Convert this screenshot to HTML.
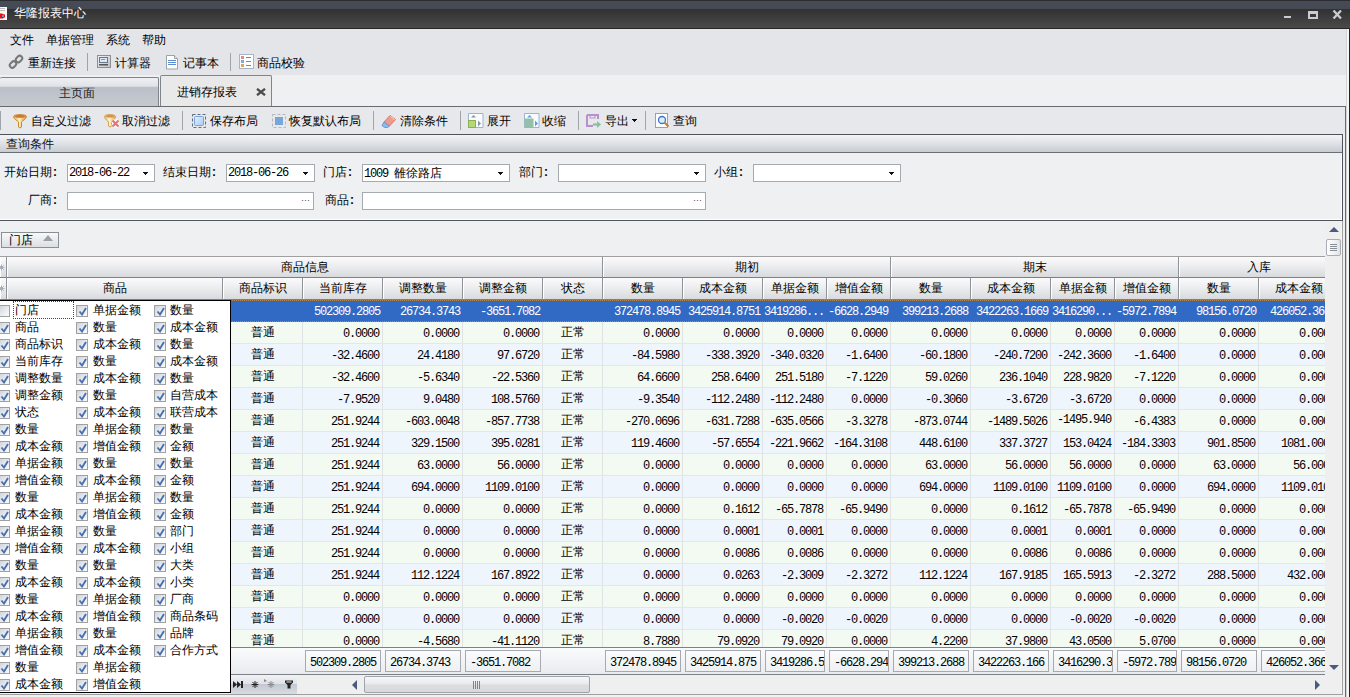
<!DOCTYPE html><html><head><meta charset="utf-8"><style>
*{margin:0;padding:0;box-sizing:border-box}
html,body{width:1350px;height:697px;overflow:hidden;background:#f0f0f0;font-family:"Liberation Sans",sans-serif;font-size:12px;color:#000}
.abs{position:absolute}
.t{position:absolute;white-space:nowrap;line-height:14px}
.num{font-family:"Liberation Mono",monospace;font-size:12px;letter-spacing:-1.2px}
#title{left:0;top:0;width:1350px;height:29px;background:linear-gradient(#2a2c30 0,#2a2c30 1px,#464b56 1px,#444954 9px,#313131 9px,#4a4a4a 28px,#262626 28px)}
#menu{left:0;top:29px;width:1350px;height:46px;background:#e4e5e9}
#tabs{left:0;top:75px;width:1350px;height:32px;background:#eff0f2}
.tab1{left:0;top:77px;width:159px;height:30px;border:1px solid #80858c;border-left:none;border-bottom:none;border-radius:2px 2px 0 0;background:linear-gradient(#eef0f3,#e0e3e7 28%,#bbc0c8 33%,#c6cad0)}
.tab2{left:160px;top:75px;width:112px;height:32px;border:1px solid #80858c;border-bottom:none;border-radius:2px 2px 0 0;background:#e9e9ea}
#win{left:0;top:106px;width:1346px;height:600px;border:1px solid #6a6a6a;border-left:none;border-bottom:none;background:#eef0f2}
#frame{left:1346px;top:29px;width:4px;height:668px;background:linear-gradient(90deg,#d2d4d6 0,#d2d4d6 1px,#f4f6f8 1px,#f4f6f8 3px,#222428 3px)}
#tb2{left:0;top:107px;width:1345px;height:27px;background:#e7e8ec}
.sep{position:absolute;width:1px;background:#9fa3aa}
#grp{left:0;top:134px;width:1343px;height:87px;border:1px solid #4e525b;border-left:none;background:#eef0f2;box-shadow:inset -1px -1px 0 #fff}
#grph{left:0;top:0;width:1342px;height:18px;background:linear-gradient(#f3f4f6,#dadde2 60%,#c8cbd1);border-bottom:1px solid #6b6f76}
.inp{position:absolute;height:18px;background:#fff;border:1px solid #a5a9b0}
.dd{position:absolute;width:0;height:0;border-left:3px solid transparent;border-right:3px solid transparent;border-top:3px solid #000}
#grid{left:0;top:221px;width:1343px;height:474px;border:1px solid #a0a0a0;border-left:none;border-top:none;background:#eef0f2}
.hc{position:absolute;background:linear-gradient(#fbfbfc,#ebecee 50%,#d9dadd);border-right:1px solid #8f9399;border-bottom:1px solid #7c8087;text-align:center;line-height:21px;box-shadow:inset 1px 0 0 #fff}
.dc{position:absolute;height:22px;border-right:1px solid #dfe3e6;border-bottom:1px solid #e3e6ea;line-height:21px;text-align:right;padding-right:3px;overflow:hidden;white-space:nowrap}
.dc.num{line-height:25px}
.fc{position:absolute;height:22px;top:650px;background:linear-gradient(#fbfbfc,#eef0f2);border:1px solid #a6aab0;line-height:24px;padding-left:4px;overflow:hidden;white-space:nowrap}
#popup{left:0;top:300px;width:231px;height:393px;background:#fff;border:1px solid #000;border-left:none;overflow:hidden}
.cb{position:absolute;width:12px;height:12px;border:1px solid #a0a0a0;background:linear-gradient(135deg,#cdd3dc,#e9ecf0 55%,#f9f9fa)}
.ck{position:absolute;left:1px;top:1px;width:9px;height:9px}
</style></head><body>
<div id="title" class="abs"></div>
<svg class="abs" style="left:0;top:7px" width="8" height="14"><rect x="0" y="0" width="7" height="13" fill="#fafafa"/><path d="M0 1.5h5M0 3.5h5" stroke="#b8b8b8"/><path d="M0 6.5h2l2 1h1v3h-1l-1 1h-3z" fill="#e01010"/><rect x="2" y="8" width="2" height="2" fill="#5a9ae0"/></svg>
<div class="t" style="left:14px;top:6px;color:#fff;font-size:12px">华隆报表中心</div>
<div class="abs" style="left:1284px;top:16px;width:7px;height:2px;background:#c8ccd4"></div>
<div class="abs" style="left:1308px;top:11px;width:10px;height:8px;border:2px solid #c8ccd4;border-top-width:3px"></div>
<svg class="abs" style="left:1332px;top:10px" width="11" height="9"><path d="M1.5 0.5l7.5 8M9 0.5l-7.5 8" stroke="#c8ccd4" stroke-width="2.3"/></svg>
<div id="menu" class="abs"></div>
<div class="t" style="left:10px;top:33px">文件</div>
<div class="t" style="left:46px;top:33px">单据管理</div>
<div class="t" style="left:106px;top:33px">系统</div>
<div class="t" style="left:142px;top:33px">帮助</div>
<div class="t" style="left:28px;top:56px">重新连接</div>
<div class="t" style="left:115px;top:56px">计算器</div>
<div class="t" style="left:183px;top:56px">记事本</div>
<div class="t" style="left:257px;top:56px">商品校验</div>
<div class="sep" style="left:87px;top:53px;height:18px"></div>
<div class="sep" style="left:230px;top:53px;height:18px"></div>
<svg class="abs" style="left:8px;top:54px" width="16" height="16"><g fill="none" stroke="#777" stroke-width="2"><rect x="1.5" y="8" width="7" height="5" rx="2.5" transform="rotate(-45 5 10.5)"/><rect x="7.5" y="2.5" width="7" height="5" rx="2.5" transform="rotate(-45 11 5)"/></g></svg>
<svg class="abs" style="left:97px;top:55px" width="14" height="14"><defs><linearGradient id="cg" x1="0" y1="0" x2="1" y2="1"><stop offset="0" stop-color="#f6f7f9"/><stop offset="1" stop-color="#b9bec6"/></linearGradient></defs><rect x="0.5" y="0.5" width="13" height="12" fill="url(#cg)" stroke="#8a9098"/><rect x="2.5" y="2.5" width="8" height="5" fill="#dbe7f5" stroke="#6a7888"/><rect x="4" y="4" width="4" height="1" fill="#7a9ac8"/><rect x="2" y="9" width="9" height="1.5" fill="#555"/></svg>
<svg class="abs" style="left:166px;top:55px" width="13" height="15"><path d="M0.5 0.5h8l3 3v10.5h-11z" fill="#fff" stroke="#9aa2ae"/><path d="M8.5 0.5v3h3" fill="#e8ecf0" stroke="#9aa2ae"/><path d="M2 5.5h8M2 7.5h8M2 9.5h8" stroke="#5a8ed0" stroke-width="1"/></svg>
<svg class="abs" style="left:239px;top:54px" width="15" height="15"><rect x="0.5" y="0.5" width="14" height="14" fill="#fff" stroke="#a8b4c8"/><rect x="2" y="2" width="3" height="3" fill="#e58a8a"/><rect x="2" y="6" width="3" height="3" fill="#7aa8e0"/><rect x="2" y="10" width="3" height="3" fill="#e8a050"/><path d="M7 3.5h5M7 7.5h5M7 11.5h5" stroke="#6a88b8"/></svg>
<div id="tabs" class="abs"></div>
<div class="abs tab1"></div>
<div class="t" style="left:59px;top:86px;color:#222">主页面</div>
<div class="abs tab2"></div>
<div class="t" style="left:177px;top:85px">进销存报表</div>
<svg class="abs" style="left:256px;top:88px" width="10" height="8"><path d="M1 0.8l8 6.4M9 0.8l-8 6.4" stroke="#4c4c4c" stroke-width="2.3"/></svg>
<div id="win" class="abs"></div><div id="frame" class="abs"></div>
<div id="tb2" class="abs"></div>
<div class="sep" style="left:0px;top:111px;height:19px"></div>
<div class="t" style="left:31px;top:114px">自定义过滤</div>
<div class="t" style="left:122px;top:114px">取消过滤</div>
<div class="t" style="left:210px;top:114px">保存布局</div>
<div class="t" style="left:289px;top:114px">恢复默认布局</div>
<div class="t" style="left:400px;top:114px">清除条件</div>
<div class="t" style="left:487px;top:114px">展开</div>
<div class="t" style="left:542px;top:114px">收缩</div>
<div class="t" style="left:605px;top:114px">导出</div>
<div class="t" style="left:673px;top:114px">查询</div>
<div class="sep" style="left:182px;top:111px;height:19px"></div>
<div class="sep" style="left:373px;top:111px;height:19px"></div>
<div class="sep" style="left:460px;top:111px;height:19px"></div>
<div class="sep" style="left:578px;top:111px;height:19px"></div>
<div class="sep" style="left:645px;top:111px;height:19px"></div>
<svg class="abs" style="left:632px;top:119px" width="5" height="3"><rect x="0" y="0" width="5" height="1" fill="#111"/><rect x="1" y="1" width="3" height="1" fill="#111"/><rect x="2" y="2" width="1" height="1" fill="#111"/></svg>
<svg class="abs" style="left:13px;top:113px" width="15" height="16"><defs><linearGradient id="fg" x1="0" y1="0" x2="1" y2="0"><stop offset="0" stop-color="#e8a848"/><stop offset="0.45" stop-color="#fff0c0"/><stop offset="1" stop-color="#d89030"/></linearGradient></defs><path d="M0.5 3.5C0.5 1 13.5 1 13.5 3.5C13.5 6 9 8 8.5 9V14C8.5 15 5.5 15 5.5 14V9C5 8 0.5 6 0.5 3.5z" fill="url(#fg)" stroke="#c88a30"/><ellipse cx="7" cy="3.2" rx="5" ry="1.5" fill="#c87838"/></svg>
<svg class="abs" style="left:104px;top:113px" width="18" height="16"><defs><linearGradient id="fg2" x1="0" y1="0" x2="1" y2="0"><stop offset="0" stop-color="#e8b860"/><stop offset="0.45" stop-color="#fff4d0"/><stop offset="1" stop-color="#dca040"/></linearGradient></defs><path d="M0.5 3.5C0.5 1 11.5 1 11.5 3.5C11.5 6 8 8 7.5 9V13C7.5 14 4.5 14 4.5 13V9C4 8 0.5 6 0.5 3.5z" fill="url(#fg2)" stroke="#d0a050"/><ellipse cx="6" cy="3.2" rx="4" ry="1.3" fill="#d09050"/><path d="M8.5 7.5l6 6M14.5 7.5l-6 6" stroke="#fff" stroke-width="4"/><path d="M8.5 7.5l6 6M14.5 7.5l-6 6" stroke="#e27474" stroke-width="2.2"/></svg>
<svg class="abs" style="left:192px;top:114px" width="15" height="14"><rect x="0.5" y="0.5" width="13" height="13" fill="none" stroke="#5f6e80" stroke-dasharray="3 2"/><defs><linearGradient id="sg" x1="0" y1="0" x2="1" y2="1"><stop offset="0" stop-color="#e4f0fd"/><stop offset="1" stop-color="#a9cbf2"/></linearGradient></defs><rect x="2.5" y="2.5" width="9" height="9" rx="1" fill="url(#sg)" stroke="#7aa4dc"/></svg>
<svg class="abs" style="left:272px;top:114px" width="15" height="14"><rect x="0.5" y="0.5" width="13" height="13" fill="none" stroke="#b4b8be" stroke-dasharray="3 2"/><rect x="3" y="3" width="8" height="8" fill="#79a5d8"/></svg>
<svg class="abs" style="left:381px;top:114px" width="16" height="14"><path d="M9 1.5L14.5 5.5L8.5 12L3 8z" fill="#f09a8a" stroke="#d87a6a"/><path d="M3 8L8.5 12L6.5 13.5H3.5L1 11.5z" fill="#8cb8ec" stroke="#6a98d8"/><path d="M9.5 2.5l4 3" stroke="#ffd8d0"/></svg>
<svg class="abs" style="left:468px;top:113px" width="16" height="15"><path d="M0.5 0.5h14.5v14h-14.5z" fill="#fafbfc" stroke="#9ab4d8"/><rect x="0.5" y="7.5" width="7" height="7" fill="#b4d878" stroke="#8ab050"/><path d="M3 4.5l2.5-2.5 2.5 2.5z" fill="#8a96a6"/><path d="M10 7.5l3 3-3 3z" fill="#8a96a6"/></svg>
<svg class="abs" style="left:524px;top:113px" width="16" height="15"><path d="M0.5 0.5h14.5v14h-14.5z" fill="#fafbfc" stroke="#9ab4d8"/><rect x="0.5" y="5.5" width="9" height="9" fill="#94c0aa"/><path d="M3 4.5l2.5-2.5 2.5 2.5z" fill="#6a9ad8"/><path d="M11 7.5l3 3-3 3z" fill="#6a9ad8"/></svg>
<svg class="abs" style="left:586px;top:114px" width="16" height="15"><path d="M1 1h11v4M1 1v11h6" fill="none" stroke="#b890d0" stroke-width="2"/><rect x="4" y="1" width="5" height="3" fill="none" stroke="#b890d0"/><path d="M7 10.5h5" stroke="#88c0a0" stroke-width="2.2"/><path d="M11 7l4 3.5-4 3.5z" fill="#88c0a0"/></svg>
<svg class="abs" style="left:655px;top:113px" width="16" height="16"><rect x="0.5" y="0.5" width="12" height="14" fill="#fff" stroke="#8ea2c0"/><circle cx="7" cy="7" r="3.5" fill="#dceafa" stroke="#3a78c8" stroke-width="1.3"/><path d="M9.5 9.5l4 4" stroke="#c87c2a" stroke-width="2"/></svg>
<div id="grp" class="abs"><div id="grph" class="abs"></div><div class="t" style="left:6px;top:2px;color:#111">查询条件</div></div>
<div class="t" style="left:4px;top:165px">开始日期<span style="display:inline-block;width:6px;text-align:center;font-weight:bold">:</span></div>
<div class="t" style="left:163px;top:165px">结束日期<span style="display:inline-block;width:6px;text-align:center;font-weight:bold">:</span></div>
<div class="t" style="left:323px;top:165px">门店<span style="display:inline-block;width:6px;text-align:center;font-weight:bold">:</span></div>
<div class="t" style="left:519px;top:165px">部门<span style="display:inline-block;width:6px;text-align:center;font-weight:bold">:</span></div>
<div class="t" style="left:714px;top:165px">小组<span style="display:inline-block;width:6px;text-align:center;font-weight:bold">:</span></div>
<div class="t" style="left:28px;top:193px">厂商<span style="display:inline-block;width:6px;text-align:center;font-weight:bold">:</span></div>
<div class="t" style="left:325px;top:193px">商品<span style="display:inline-block;width:6px;text-align:center;font-weight:bold">:</span></div>
<div class="inp" style="left:67px;top:164px;width:88px"></div>
<div class="t num" style="left:69px;top:166px">2018-06-22</div>
<svg class="abs" style="left:143px;top:172px" width="5" height="3"><rect x="0" y="0" width="5" height="1" fill="#111"/><rect x="1" y="1" width="3" height="1" fill="#111"/><rect x="2" y="2" width="1" height="1" fill="#111"/></svg>
<div class="inp" style="left:226px;top:164px;width:89px"></div>
<div class="t num" style="left:228px;top:166px">2018-06-26</div>
<svg class="abs" style="left:303px;top:172px" width="5" height="3"><rect x="0" y="0" width="5" height="1" fill="#111"/><rect x="1" y="1" width="3" height="1" fill="#111"/><rect x="2" y="2" width="1" height="1" fill="#111"/></svg>
<div class="inp" style="left:362px;top:164px;width:148px"></div>
<div class="t" style="left:364px;top:166px"><span class="num">1009&nbsp;</span>雒徐路店</div>
<svg class="abs" style="left:498px;top:172px" width="5" height="3"><rect x="0" y="0" width="5" height="1" fill="#111"/><rect x="1" y="1" width="3" height="1" fill="#111"/><rect x="2" y="2" width="1" height="1" fill="#111"/></svg>
<div class="inp" style="left:558px;top:164px;width:148px"></div>
<svg class="abs" style="left:694px;top:172px" width="5" height="3"><rect x="0" y="0" width="5" height="1" fill="#111"/><rect x="1" y="1" width="3" height="1" fill="#111"/><rect x="2" y="2" width="1" height="1" fill="#111"/></svg>
<div class="inp" style="left:753px;top:164px;width:148px"></div>
<svg class="abs" style="left:889px;top:172px" width="5" height="3"><rect x="0" y="0" width="5" height="1" fill="#111"/><rect x="1" y="1" width="3" height="1" fill="#111"/><rect x="2" y="2" width="1" height="1" fill="#111"/></svg>
<div class="inp" style="left:67px;top:192px;width:247px"></div>
<div class="t" style="left:301px;top:193px;font-size:9px;color:#444">···</div>
<div class="inp" style="left:362px;top:192px;width:344px"></div>
<div class="t" style="left:693px;top:193px;font-size:9px;color:#444">···</div>
<div id="grid" class="abs"></div>
<div class="abs" style="left:1px;top:232px;width:58px;height:16px;border:1px solid #8a8e95;background:linear-gradient(#f7f8f9,#dcdfe3)"></div>
<div class="t" style="left:9px;top:233px">门店</div>
<div class="abs" style="left:43px;top:235px;width:0;height:0;border-left:5.5px solid transparent;border-right:5.5px solid transparent;border-bottom:6px solid #9aa0a8"></div>
<div class="abs" style="left:0;top:256px;width:1325px;height:1px;background:#a0a0a0"></div>
<div class="abs" style="left:0;top:257px;width:1325px;height:390px;overflow:hidden">
<div class="hc" style="left:0;top:0;width:7px;height:21px"></div><div class="hc" style="left:0;top:21px;width:7px;height:22px"></div><svg class="abs" style="left:-2px;top:7px" width="7" height="7"><path d="M3.5 0.5v6M0.5 3.5h6M1.3 1.3l4.4 4.4M5.7 1.3l-4.4 4.4" stroke="#a0a8b4" stroke-width="0.9"/></svg><svg class="abs" style="left:-2px;top:28px" width="7" height="7"><path d="M3.5 0.5v6M0.5 3.5h6M1.3 1.3l4.4 4.4M5.7 1.3l-4.4 4.4" stroke="#a0a8b4" stroke-width="0.9"/></svg>
<div class="hc" style="left:7px;top:0;width:596px;height:21px">商品信息</div>
<div class="hc" style="left:603px;top:0;width:288px;height:21px">期初</div>
<div class="hc" style="left:891px;top:0;width:288px;height:21px">期末</div>
<div class="hc" style="left:1179px;top:0;width:160px;height:21px">入库</div>
<div class="hc" style="left:7px;top:21px;width:216px;height:22px">商品</div>
<div class="hc" style="left:223px;top:21px;width:80px;height:22px">商品标识</div>
<div class="hc" style="left:303px;top:21px;width:80px;height:22px">当前库存</div>
<div class="hc" style="left:383px;top:21px;width:80px;height:22px">调整数量</div>
<div class="hc" style="left:463px;top:21px;width:80px;height:22px">调整金额</div>
<div class="hc" style="left:543px;top:21px;width:60px;height:22px">状态</div>
<div class="hc" style="left:603px;top:21px;width:80px;height:22px">数量</div>
<div class="hc" style="left:683px;top:21px;width:80px;height:22px">成本金额</div>
<div class="hc" style="left:763px;top:21px;width:64px;height:22px">单据金额</div>
<div class="hc" style="left:827px;top:21px;width:64px;height:22px">增值金额</div>
<div class="hc" style="left:891px;top:21px;width:80px;height:22px">数量</div>
<div class="hc" style="left:971px;top:21px;width:80px;height:22px">成本金额</div>
<div class="hc" style="left:1051px;top:21px;width:64px;height:22px">单据金额</div>
<div class="hc" style="left:1115px;top:21px;width:64px;height:22px">增值金额</div>
<div class="hc" style="left:1179px;top:21px;width:80px;height:22px">数量</div>
<div class="hc" style="left:1259px;top:21px;width:80px;height:22px">成本金额</div>
<div class="abs" style="left:7px;top:43px;width:1320px;height:22px;background:#316ac5;border-top:1px dotted #b08a50;border-bottom:1px dotted #b08a50"></div>
<div class="dc num" style="left:303px;top:43px;width:80px;color:#fff;border:none">502309.2805</div>
<div class="dc num" style="left:383px;top:43px;width:80px;color:#fff;border:none">26734.3743</div>
<div class="dc num" style="left:463px;top:43px;width:80px;color:#fff;border:none">-3651.7082</div>
<div class="dc num" style="left:603px;top:43px;width:80px;color:#fff;border:none">372478.8945</div>
<div class="dc num" style="left:683px;top:43px;width:80px;color:#fff;border:none">3425914.8751</div>
<div class="dc num" style="left:763px;top:43px;width:64px;color:#fff;border:none">3419286...</div>
<div class="dc num" style="left:827px;top:43px;width:64px;color:#fff;border:none">-6628.2949</div>
<div class="dc num" style="left:891px;top:43px;width:80px;color:#fff;border:none">399213.2688</div>
<div class="dc num" style="left:971px;top:43px;width:80px;color:#fff;border:none">3422263.1669</div>
<div class="dc num" style="left:1051px;top:43px;width:64px;color:#fff;border:none">3416290...</div>
<div class="dc num" style="left:1115px;top:43px;width:64px;color:#fff;border:none">-5972.7894</div>
<div class="dc num" style="left:1179px;top:43px;width:80px;color:#fff;border:none">98156.0720</div>
<div class="dc num" style="left:1259px;top:43px;width:80px;color:#fff;border:none">426052.3660</div>
<div class="abs" style="left:7px;top:65px;width:1320px;height:22px;background:#f3faf1"></div>
<div class="dc" style="left:223px;top:65px;width:80px;text-align:center;padding:0">普通</div>
<div class="dc num" style="left:303px;top:65px;width:80px">0.0000</div>
<div class="dc num" style="left:383px;top:65px;width:80px">0.0000</div>
<div class="dc num" style="left:463px;top:65px;width:80px">0.0000</div>
<div class="dc" style="left:543px;top:65px;width:60px;text-align:center;padding:0">正常</div>
<div class="dc num" style="left:603px;top:65px;width:80px">0.0000</div>
<div class="dc num" style="left:683px;top:65px;width:80px">0.0000</div>
<div class="dc num" style="left:763px;top:65px;width:64px">0.0000</div>
<div class="dc num" style="left:827px;top:65px;width:64px">0.0000</div>
<div class="dc num" style="left:891px;top:65px;width:80px">0.0000</div>
<div class="dc num" style="left:971px;top:65px;width:80px">0.0000</div>
<div class="dc num" style="left:1051px;top:65px;width:64px">0.0000</div>
<div class="dc num" style="left:1115px;top:65px;width:64px">0.0000</div>
<div class="dc num" style="left:1179px;top:65px;width:80px">0.0000</div>
<div class="dc num" style="left:1259px;top:65px;width:80px">0.0000</div>
<div class="abs" style="left:7px;top:87px;width:1320px;height:22px;background:#eef5fd"></div>
<div class="dc" style="left:223px;top:87px;width:80px;text-align:center;padding:0">普通</div>
<div class="dc num" style="left:303px;top:87px;width:80px">-32.4600</div>
<div class="dc num" style="left:383px;top:87px;width:80px">24.4180</div>
<div class="dc num" style="left:463px;top:87px;width:80px">97.6720</div>
<div class="dc" style="left:543px;top:87px;width:60px;text-align:center;padding:0">正常</div>
<div class="dc num" style="left:603px;top:87px;width:80px">-84.5980</div>
<div class="dc num" style="left:683px;top:87px;width:80px">-338.3920</div>
<div class="dc num" style="left:763px;top:87px;width:64px">-340.0320</div>
<div class="dc num" style="left:827px;top:87px;width:64px">-1.6400</div>
<div class="dc num" style="left:891px;top:87px;width:80px">-60.1800</div>
<div class="dc num" style="left:971px;top:87px;width:80px">-240.7200</div>
<div class="dc num" style="left:1051px;top:87px;width:64px">-242.3600</div>
<div class="dc num" style="left:1115px;top:87px;width:64px">-1.6400</div>
<div class="dc num" style="left:1179px;top:87px;width:80px">0.0000</div>
<div class="dc num" style="left:1259px;top:87px;width:80px">0.0000</div>
<div class="abs" style="left:7px;top:109px;width:1320px;height:22px;background:#f3faf1"></div>
<div class="dc" style="left:223px;top:109px;width:80px;text-align:center;padding:0">普通</div>
<div class="dc num" style="left:303px;top:109px;width:80px">-32.4600</div>
<div class="dc num" style="left:383px;top:109px;width:80px">-5.6340</div>
<div class="dc num" style="left:463px;top:109px;width:80px">-22.5360</div>
<div class="dc" style="left:543px;top:109px;width:60px;text-align:center;padding:0">正常</div>
<div class="dc num" style="left:603px;top:109px;width:80px">64.6600</div>
<div class="dc num" style="left:683px;top:109px;width:80px">258.6400</div>
<div class="dc num" style="left:763px;top:109px;width:64px">251.5180</div>
<div class="dc num" style="left:827px;top:109px;width:64px">-7.1220</div>
<div class="dc num" style="left:891px;top:109px;width:80px">59.0260</div>
<div class="dc num" style="left:971px;top:109px;width:80px">236.1040</div>
<div class="dc num" style="left:1051px;top:109px;width:64px">228.9820</div>
<div class="dc num" style="left:1115px;top:109px;width:64px">-7.1220</div>
<div class="dc num" style="left:1179px;top:109px;width:80px">0.0000</div>
<div class="dc num" style="left:1259px;top:109px;width:80px">0.0000</div>
<div class="abs" style="left:7px;top:131px;width:1320px;height:22px;background:#eef5fd"></div>
<div class="dc" style="left:223px;top:131px;width:80px;text-align:center;padding:0">普通</div>
<div class="dc num" style="left:303px;top:131px;width:80px">-7.9520</div>
<div class="dc num" style="left:383px;top:131px;width:80px">9.0480</div>
<div class="dc num" style="left:463px;top:131px;width:80px">108.5760</div>
<div class="dc" style="left:543px;top:131px;width:60px;text-align:center;padding:0">正常</div>
<div class="dc num" style="left:603px;top:131px;width:80px">-9.3540</div>
<div class="dc num" style="left:683px;top:131px;width:80px">-112.2480</div>
<div class="dc num" style="left:763px;top:131px;width:64px">-112.2480</div>
<div class="dc num" style="left:827px;top:131px;width:64px">0.0000</div>
<div class="dc num" style="left:891px;top:131px;width:80px">-0.3060</div>
<div class="dc num" style="left:971px;top:131px;width:80px">-3.6720</div>
<div class="dc num" style="left:1051px;top:131px;width:64px">-3.6720</div>
<div class="dc num" style="left:1115px;top:131px;width:64px">0.0000</div>
<div class="dc num" style="left:1179px;top:131px;width:80px">0.0000</div>
<div class="dc num" style="left:1259px;top:131px;width:80px">0.0000</div>
<div class="abs" style="left:7px;top:153px;width:1320px;height:22px;background:#f3faf1"></div>
<div class="dc" style="left:223px;top:153px;width:80px;text-align:center;padding:0">普通</div>
<div class="dc num" style="left:303px;top:153px;width:80px">251.9244</div>
<div class="dc num" style="left:383px;top:153px;width:80px">-603.0048</div>
<div class="dc num" style="left:463px;top:153px;width:80px">-857.7738</div>
<div class="dc" style="left:543px;top:153px;width:60px;text-align:center;padding:0">正常</div>
<div class="dc num" style="left:603px;top:153px;width:80px">-270.0696</div>
<div class="dc num" style="left:683px;top:153px;width:80px">-631.7288</div>
<div class="dc num" style="left:763px;top:153px;width:64px">-635.0566</div>
<div class="dc num" style="left:827px;top:153px;width:64px">-3.3278</div>
<div class="dc num" style="left:891px;top:153px;width:80px">-873.0744</div>
<div class="dc num" style="left:971px;top:153px;width:80px">-1489.5026</div>
<div class="dc num" style="left:1051px;top:153px;width:64px;line-height:21px">-1495.940</div>
<div class="dc num" style="left:1115px;top:153px;width:64px">-6.4383</div>
<div class="dc num" style="left:1179px;top:153px;width:80px">0.0000</div>
<div class="dc num" style="left:1259px;top:153px;width:80px">0.0000</div>
<div class="abs" style="left:7px;top:175px;width:1320px;height:22px;background:#eef5fd"></div>
<div class="dc" style="left:223px;top:175px;width:80px;text-align:center;padding:0">普通</div>
<div class="dc num" style="left:303px;top:175px;width:80px">251.9244</div>
<div class="dc num" style="left:383px;top:175px;width:80px">329.1500</div>
<div class="dc num" style="left:463px;top:175px;width:80px">395.0281</div>
<div class="dc" style="left:543px;top:175px;width:60px;text-align:center;padding:0">正常</div>
<div class="dc num" style="left:603px;top:175px;width:80px">119.4600</div>
<div class="dc num" style="left:683px;top:175px;width:80px">-57.6554</div>
<div class="dc num" style="left:763px;top:175px;width:64px">-221.9662</div>
<div class="dc num" style="left:827px;top:175px;width:64px">-164.3108</div>
<div class="dc num" style="left:891px;top:175px;width:80px">448.6100</div>
<div class="dc num" style="left:971px;top:175px;width:80px">337.3727</div>
<div class="dc num" style="left:1051px;top:175px;width:64px">153.0424</div>
<div class="dc num" style="left:1115px;top:175px;width:64px">-184.3303</div>
<div class="dc num" style="left:1179px;top:175px;width:80px">901.8500</div>
<div class="dc num" style="left:1259px;top:175px;width:80px">1081.0000</div>
<div class="abs" style="left:7px;top:197px;width:1320px;height:22px;background:#f3faf1"></div>
<div class="dc" style="left:223px;top:197px;width:80px;text-align:center;padding:0">普通</div>
<div class="dc num" style="left:303px;top:197px;width:80px">251.9244</div>
<div class="dc num" style="left:383px;top:197px;width:80px">63.0000</div>
<div class="dc num" style="left:463px;top:197px;width:80px">56.0000</div>
<div class="dc" style="left:543px;top:197px;width:60px;text-align:center;padding:0">正常</div>
<div class="dc num" style="left:603px;top:197px;width:80px">0.0000</div>
<div class="dc num" style="left:683px;top:197px;width:80px">0.0000</div>
<div class="dc num" style="left:763px;top:197px;width:64px">0.0000</div>
<div class="dc num" style="left:827px;top:197px;width:64px">0.0000</div>
<div class="dc num" style="left:891px;top:197px;width:80px">63.0000</div>
<div class="dc num" style="left:971px;top:197px;width:80px">56.0000</div>
<div class="dc num" style="left:1051px;top:197px;width:64px">56.0000</div>
<div class="dc num" style="left:1115px;top:197px;width:64px">0.0000</div>
<div class="dc num" style="left:1179px;top:197px;width:80px">63.0000</div>
<div class="dc num" style="left:1259px;top:197px;width:80px">56.0000</div>
<div class="abs" style="left:7px;top:219px;width:1320px;height:22px;background:#eef5fd"></div>
<div class="dc" style="left:223px;top:219px;width:80px;text-align:center;padding:0">普通</div>
<div class="dc num" style="left:303px;top:219px;width:80px">251.9244</div>
<div class="dc num" style="left:383px;top:219px;width:80px">694.0000</div>
<div class="dc num" style="left:463px;top:219px;width:80px">1109.0100</div>
<div class="dc" style="left:543px;top:219px;width:60px;text-align:center;padding:0">正常</div>
<div class="dc num" style="left:603px;top:219px;width:80px">0.0000</div>
<div class="dc num" style="left:683px;top:219px;width:80px">0.0000</div>
<div class="dc num" style="left:763px;top:219px;width:64px">0.0000</div>
<div class="dc num" style="left:827px;top:219px;width:64px">0.0000</div>
<div class="dc num" style="left:891px;top:219px;width:80px">694.0000</div>
<div class="dc num" style="left:971px;top:219px;width:80px">1109.0100</div>
<div class="dc num" style="left:1051px;top:219px;width:64px">1109.0100</div>
<div class="dc num" style="left:1115px;top:219px;width:64px">0.0000</div>
<div class="dc num" style="left:1179px;top:219px;width:80px">694.0000</div>
<div class="dc num" style="left:1259px;top:219px;width:80px">1109.0100</div>
<div class="abs" style="left:7px;top:241px;width:1320px;height:22px;background:#f3faf1"></div>
<div class="dc" style="left:223px;top:241px;width:80px;text-align:center;padding:0">普通</div>
<div class="dc num" style="left:303px;top:241px;width:80px">251.9244</div>
<div class="dc num" style="left:383px;top:241px;width:80px">0.0000</div>
<div class="dc num" style="left:463px;top:241px;width:80px">0.0000</div>
<div class="dc" style="left:543px;top:241px;width:60px;text-align:center;padding:0">正常</div>
<div class="dc num" style="left:603px;top:241px;width:80px">0.0000</div>
<div class="dc num" style="left:683px;top:241px;width:80px">0.1612</div>
<div class="dc num" style="left:763px;top:241px;width:64px">-65.7878</div>
<div class="dc num" style="left:827px;top:241px;width:64px">-65.9490</div>
<div class="dc num" style="left:891px;top:241px;width:80px">0.0000</div>
<div class="dc num" style="left:971px;top:241px;width:80px">0.1612</div>
<div class="dc num" style="left:1051px;top:241px;width:64px">-65.7878</div>
<div class="dc num" style="left:1115px;top:241px;width:64px">-65.9490</div>
<div class="dc num" style="left:1179px;top:241px;width:80px">0.0000</div>
<div class="dc num" style="left:1259px;top:241px;width:80px">0.0000</div>
<div class="abs" style="left:7px;top:263px;width:1320px;height:22px;background:#eef5fd"></div>
<div class="dc" style="left:223px;top:263px;width:80px;text-align:center;padding:0">普通</div>
<div class="dc num" style="left:303px;top:263px;width:80px">251.9244</div>
<div class="dc num" style="left:383px;top:263px;width:80px">0.0000</div>
<div class="dc num" style="left:463px;top:263px;width:80px">0.0000</div>
<div class="dc" style="left:543px;top:263px;width:60px;text-align:center;padding:0">正常</div>
<div class="dc num" style="left:603px;top:263px;width:80px">0.0000</div>
<div class="dc num" style="left:683px;top:263px;width:80px">0.0001</div>
<div class="dc num" style="left:763px;top:263px;width:64px">0.0001</div>
<div class="dc num" style="left:827px;top:263px;width:64px">0.0000</div>
<div class="dc num" style="left:891px;top:263px;width:80px">0.0000</div>
<div class="dc num" style="left:971px;top:263px;width:80px">0.0001</div>
<div class="dc num" style="left:1051px;top:263px;width:64px">0.0001</div>
<div class="dc num" style="left:1115px;top:263px;width:64px">0.0000</div>
<div class="dc num" style="left:1179px;top:263px;width:80px">0.0000</div>
<div class="dc num" style="left:1259px;top:263px;width:80px">0.0000</div>
<div class="abs" style="left:7px;top:285px;width:1320px;height:22px;background:#f3faf1"></div>
<div class="dc" style="left:223px;top:285px;width:80px;text-align:center;padding:0">普通</div>
<div class="dc num" style="left:303px;top:285px;width:80px">251.9244</div>
<div class="dc num" style="left:383px;top:285px;width:80px">0.0000</div>
<div class="dc num" style="left:463px;top:285px;width:80px">0.0000</div>
<div class="dc" style="left:543px;top:285px;width:60px;text-align:center;padding:0">正常</div>
<div class="dc num" style="left:603px;top:285px;width:80px">0.0000</div>
<div class="dc num" style="left:683px;top:285px;width:80px">0.0086</div>
<div class="dc num" style="left:763px;top:285px;width:64px">0.0086</div>
<div class="dc num" style="left:827px;top:285px;width:64px">0.0000</div>
<div class="dc num" style="left:891px;top:285px;width:80px">0.0000</div>
<div class="dc num" style="left:971px;top:285px;width:80px">0.0086</div>
<div class="dc num" style="left:1051px;top:285px;width:64px">0.0086</div>
<div class="dc num" style="left:1115px;top:285px;width:64px">0.0000</div>
<div class="dc num" style="left:1179px;top:285px;width:80px">0.0000</div>
<div class="dc num" style="left:1259px;top:285px;width:80px">0.0000</div>
<div class="abs" style="left:7px;top:307px;width:1320px;height:22px;background:#eef5fd"></div>
<div class="dc" style="left:223px;top:307px;width:80px;text-align:center;padding:0">普通</div>
<div class="dc num" style="left:303px;top:307px;width:80px">251.9244</div>
<div class="dc num" style="left:383px;top:307px;width:80px">112.1224</div>
<div class="dc num" style="left:463px;top:307px;width:80px">167.8922</div>
<div class="dc" style="left:543px;top:307px;width:60px;text-align:center;padding:0">正常</div>
<div class="dc num" style="left:603px;top:307px;width:80px">0.0000</div>
<div class="dc num" style="left:683px;top:307px;width:80px">0.0263</div>
<div class="dc num" style="left:763px;top:307px;width:64px">-2.3009</div>
<div class="dc num" style="left:827px;top:307px;width:64px">-2.3272</div>
<div class="dc num" style="left:891px;top:307px;width:80px">112.1224</div>
<div class="dc num" style="left:971px;top:307px;width:80px">167.9185</div>
<div class="dc num" style="left:1051px;top:307px;width:64px">165.5913</div>
<div class="dc num" style="left:1115px;top:307px;width:64px">-2.3272</div>
<div class="dc num" style="left:1179px;top:307px;width:80px">288.5000</div>
<div class="dc num" style="left:1259px;top:307px;width:80px">432.0000</div>
<div class="abs" style="left:7px;top:329px;width:1320px;height:22px;background:#f3faf1"></div>
<div class="dc" style="left:223px;top:329px;width:80px;text-align:center;padding:0">普通</div>
<div class="dc num" style="left:303px;top:329px;width:80px">0.0000</div>
<div class="dc num" style="left:383px;top:329px;width:80px">0.0000</div>
<div class="dc num" style="left:463px;top:329px;width:80px">0.0000</div>
<div class="dc" style="left:543px;top:329px;width:60px;text-align:center;padding:0">正常</div>
<div class="dc num" style="left:603px;top:329px;width:80px">0.0000</div>
<div class="dc num" style="left:683px;top:329px;width:80px">0.0000</div>
<div class="dc num" style="left:763px;top:329px;width:64px">0.0000</div>
<div class="dc num" style="left:827px;top:329px;width:64px">0.0000</div>
<div class="dc num" style="left:891px;top:329px;width:80px">0.0000</div>
<div class="dc num" style="left:971px;top:329px;width:80px">0.0000</div>
<div class="dc num" style="left:1051px;top:329px;width:64px">0.0000</div>
<div class="dc num" style="left:1115px;top:329px;width:64px">0.0000</div>
<div class="dc num" style="left:1179px;top:329px;width:80px">0.0000</div>
<div class="dc num" style="left:1259px;top:329px;width:80px">0.0000</div>
<div class="abs" style="left:7px;top:351px;width:1320px;height:22px;background:#eef5fd"></div>
<div class="dc" style="left:223px;top:351px;width:80px;text-align:center;padding:0">普通</div>
<div class="dc num" style="left:303px;top:351px;width:80px">0.0000</div>
<div class="dc num" style="left:383px;top:351px;width:80px">0.0000</div>
<div class="dc num" style="left:463px;top:351px;width:80px">0.0000</div>
<div class="dc" style="left:543px;top:351px;width:60px;text-align:center;padding:0">正常</div>
<div class="dc num" style="left:603px;top:351px;width:80px">0.0000</div>
<div class="dc num" style="left:683px;top:351px;width:80px">0.0000</div>
<div class="dc num" style="left:763px;top:351px;width:64px">-0.0020</div>
<div class="dc num" style="left:827px;top:351px;width:64px">-0.0020</div>
<div class="dc num" style="left:891px;top:351px;width:80px">0.0000</div>
<div class="dc num" style="left:971px;top:351px;width:80px">0.0000</div>
<div class="dc num" style="left:1051px;top:351px;width:64px">-0.0020</div>
<div class="dc num" style="left:1115px;top:351px;width:64px">-0.0020</div>
<div class="dc num" style="left:1179px;top:351px;width:80px">0.0000</div>
<div class="dc num" style="left:1259px;top:351px;width:80px">0.0000</div>
<div class="abs" style="left:7px;top:373px;width:1320px;height:22px;background:#f3faf1"></div>
<div class="dc" style="left:223px;top:373px;width:80px;text-align:center;padding:0">普通</div>
<div class="dc num" style="left:303px;top:373px;width:80px">0.0000</div>
<div class="dc num" style="left:383px;top:373px;width:80px">-4.5680</div>
<div class="dc num" style="left:463px;top:373px;width:80px">-41.1120</div>
<div class="dc" style="left:543px;top:373px;width:60px;text-align:center;padding:0">正常</div>
<div class="dc num" style="left:603px;top:373px;width:80px">8.7880</div>
<div class="dc num" style="left:683px;top:373px;width:80px">79.0920</div>
<div class="dc num" style="left:763px;top:373px;width:64px">79.0920</div>
<div class="dc num" style="left:827px;top:373px;width:64px">0.0000</div>
<div class="dc num" style="left:891px;top:373px;width:80px">4.2200</div>
<div class="dc num" style="left:971px;top:373px;width:80px">37.9800</div>
<div class="dc num" style="left:1051px;top:373px;width:64px">43.0500</div>
<div class="dc num" style="left:1115px;top:373px;width:64px">5.0700</div>
<div class="dc num" style="left:1179px;top:373px;width:80px">0.0000</div>
<div class="dc num" style="left:1259px;top:373px;width:80px">0.0000</div>
</div>
<div class="abs" style="left:7px;top:647px;width:1318px;height:28px;background:linear-gradient(#fafbfc,#e9ebee);border-top:1px solid #7c8087;border-bottom:1px solid #7c8087"></div>
<div class="fc num" style="left:305px;width:76px">502309.2805</div>
<div class="fc num" style="left:385px;width:76px">26734.3743</div>
<div class="fc num" style="left:465px;width:76px">-3651.7082</div>
<div class="fc num" style="left:605px;width:76px">372478.8945</div>
<div class="fc num" style="left:685px;width:76px">3425914.875</div>
<div class="fc num" style="left:765px;width:60px">3419286.5</div>
<div class="fc num" style="left:829px;width:60px">-6628.2949</div>
<div class="fc num" style="left:893px;width:76px">399213.2688</div>
<div class="fc num" style="left:973px;width:76px">3422263.166</div>
<div class="fc num" style="left:1053px;width:60px">3416290.3</div>
<div class="fc num" style="left:1117px;width:60px">-5972.7894</div>
<div class="fc num" style="left:1181px;width:76px">98156.0720</div>
<div class="fc num" style="left:1261px;width:76px">426052.366</div>
<div class="abs" style="left:0;top:675px;width:1325px;height:19px;background:#efefef"></div>
<div class="abs" style="left:231px;top:676px;width:64px;height:17px;background:linear-gradient(#eef0f3,#c9ced6)"></div>
<svg class="abs" style="left:231px;top:675px" width="66" height="19"><defs><linearGradient id="ng" x1="0" y1="0" x2="0" y2="1"><stop offset="0" stop-color="#f2f3f5"/><stop offset="0.45" stop-color="#dfe2e7"/><stop offset="0.5" stop-color="#c3c9d2"/><stop offset="1" stop-color="#d8dce2"/></linearGradient></defs><rect width="66" height="19" fill="url(#ng)"/><path d="M2 6l4 3.5-4 3.5zM6 6l4 3.5-4 3.5z" fill="#222"/><rect x="10" y="6" width="2" height="7" fill="#222"/><g stroke="#222" stroke-width="1"><path d="M24 6v7M20.5 9.5h7M21.5 7l5 5M26.5 7l-5 5"/></g><g stroke="#888" stroke-width="1"><path d="M40 6v7M36.5 9.5h7M37.5 7l5 5M42.5 7l-5 5"/></g><path d="M33 4l3 2-3 1z" fill="#888"/><path d="M54 5.5h8v2l-2.5 2.5v3.5h-3v-3.5l-2.5-2.5z" fill="#222"/><rect x="55.5" y="6.5" width="5" height="1" fill="#f0f0f0"/></svg>
<div class="abs" style="left:352px;top:680px;width:0;height:0;border-top:5px solid transparent;border-bottom:5px solid transparent;border-right:5px solid #4a5a80"></div>
<div class="abs" style="left:364px;top:676px;width:226px;height:17px;border:1px solid #a0a4aa;border-radius:2px;background:linear-gradient(#f8f8f9,#e9eaec 45%,#dcdde0 55%,#d8d9dc)"><div class="abs" style="left:108px;top:4px;width:1px;height:8px;background:#80848a;box-shadow:2px 0 0 #80848a,4px 0 0 #80848a,6px 0 0 #80848a"></div></div>
<div class="abs" style="left:1315px;top:680px;width:0;height:0;border-top:5px solid transparent;border-bottom:5px solid transparent;border-left:5px solid #4a5a80"></div>
<div class="abs" style="left:1325px;top:221px;width:17px;height:473px;background:#efefef;border-right:1px solid #f4f5f7"></div>
<div class="abs" style="left:1329px;top:227px;width:0;height:0;border-left:5px solid transparent;border-right:5px solid transparent;border-bottom:5px solid #4a5a80"></div>
<div class="abs" style="left:1326px;top:239px;width:15px;height:17px;border:1px solid #a9adb4;border-radius:2px;background:linear-gradient(90deg,#fff,#f0f1f3 60%,#dfe2e6)"><div class="abs" style="left:3px;top:4px;width:7px;height:1px;background:#8a8e95;box-shadow:0 2px 0 #8a8e95,0 4px 0 #8a8e95,0 6px 0 #8a8e95"></div></div>
<div class="abs" style="left:1329px;top:665px;width:0;height:0;border-left:5px solid transparent;border-right:5px solid transparent;border-top:5px solid #4a5a80"></div>
<div id="popup" class="abs">
<div class="cb" style="left:-2px;top:4px"></div>
<div class="t" style="left:15px;top:2px">门店</div>
<div class="cb" style="left:76px;top:4px"><svg class="ck" viewBox="0 0 9 9"><path d="M1.5 4.5l2.5 3 4-6.5" fill="none" stroke="#4a70ae" stroke-width="1.9"/></svg></div>
<div class="t" style="left:93px;top:2px">单据金额</div>
<div class="cb" style="left:154px;top:4px"><svg class="ck" viewBox="0 0 9 9"><path d="M1.5 4.5l2.5 3 4-6.5" fill="none" stroke="#4a70ae" stroke-width="1.9"/></svg></div>
<div class="t" style="left:170px;top:2px">数量</div>
<div class="cb" style="left:-2px;top:21px"><svg class="ck" viewBox="0 0 9 9"><path d="M1.5 4.5l2.5 3 4-6.5" fill="none" stroke="#4a70ae" stroke-width="1.9"/></svg></div>
<div class="t" style="left:15px;top:19px">商品</div>
<div class="cb" style="left:76px;top:21px"><svg class="ck" viewBox="0 0 9 9"><path d="M1.5 4.5l2.5 3 4-6.5" fill="none" stroke="#4a70ae" stroke-width="1.9"/></svg></div>
<div class="t" style="left:93px;top:19px">数量</div>
<div class="cb" style="left:154px;top:21px"><svg class="ck" viewBox="0 0 9 9"><path d="M1.5 4.5l2.5 3 4-6.5" fill="none" stroke="#4a70ae" stroke-width="1.9"/></svg></div>
<div class="t" style="left:170px;top:19px">成本金额</div>
<div class="cb" style="left:-2px;top:38px"><svg class="ck" viewBox="0 0 9 9"><path d="M1.5 4.5l2.5 3 4-6.5" fill="none" stroke="#4a70ae" stroke-width="1.9"/></svg></div>
<div class="t" style="left:15px;top:36px">商品标识</div>
<div class="cb" style="left:76px;top:38px"><svg class="ck" viewBox="0 0 9 9"><path d="M1.5 4.5l2.5 3 4-6.5" fill="none" stroke="#4a70ae" stroke-width="1.9"/></svg></div>
<div class="t" style="left:93px;top:36px">成本金额</div>
<div class="cb" style="left:154px;top:38px"><svg class="ck" viewBox="0 0 9 9"><path d="M1.5 4.5l2.5 3 4-6.5" fill="none" stroke="#4a70ae" stroke-width="1.9"/></svg></div>
<div class="t" style="left:170px;top:36px">数量</div>
<div class="cb" style="left:-2px;top:55px"><svg class="ck" viewBox="0 0 9 9"><path d="M1.5 4.5l2.5 3 4-6.5" fill="none" stroke="#4a70ae" stroke-width="1.9"/></svg></div>
<div class="t" style="left:15px;top:53px">当前库存</div>
<div class="cb" style="left:76px;top:55px"><svg class="ck" viewBox="0 0 9 9"><path d="M1.5 4.5l2.5 3 4-6.5" fill="none" stroke="#4a70ae" stroke-width="1.9"/></svg></div>
<div class="t" style="left:93px;top:53px">数量</div>
<div class="cb" style="left:154px;top:55px"><svg class="ck" viewBox="0 0 9 9"><path d="M1.5 4.5l2.5 3 4-6.5" fill="none" stroke="#4a70ae" stroke-width="1.9"/></svg></div>
<div class="t" style="left:170px;top:53px">成本金额</div>
<div class="cb" style="left:-2px;top:72px"><svg class="ck" viewBox="0 0 9 9"><path d="M1.5 4.5l2.5 3 4-6.5" fill="none" stroke="#4a70ae" stroke-width="1.9"/></svg></div>
<div class="t" style="left:15px;top:70px">调整数量</div>
<div class="cb" style="left:76px;top:72px"><svg class="ck" viewBox="0 0 9 9"><path d="M1.5 4.5l2.5 3 4-6.5" fill="none" stroke="#4a70ae" stroke-width="1.9"/></svg></div>
<div class="t" style="left:93px;top:70px">成本金额</div>
<div class="cb" style="left:154px;top:72px"><svg class="ck" viewBox="0 0 9 9"><path d="M1.5 4.5l2.5 3 4-6.5" fill="none" stroke="#4a70ae" stroke-width="1.9"/></svg></div>
<div class="t" style="left:170px;top:70px">数量</div>
<div class="cb" style="left:-2px;top:89px"><svg class="ck" viewBox="0 0 9 9"><path d="M1.5 4.5l2.5 3 4-6.5" fill="none" stroke="#4a70ae" stroke-width="1.9"/></svg></div>
<div class="t" style="left:15px;top:87px">调整金额</div>
<div class="cb" style="left:76px;top:89px"><svg class="ck" viewBox="0 0 9 9"><path d="M1.5 4.5l2.5 3 4-6.5" fill="none" stroke="#4a70ae" stroke-width="1.9"/></svg></div>
<div class="t" style="left:93px;top:87px">数量</div>
<div class="cb" style="left:154px;top:89px"><svg class="ck" viewBox="0 0 9 9"><path d="M1.5 4.5l2.5 3 4-6.5" fill="none" stroke="#4a70ae" stroke-width="1.9"/></svg></div>
<div class="t" style="left:170px;top:87px">自营成本</div>
<div class="cb" style="left:-2px;top:106px"><svg class="ck" viewBox="0 0 9 9"><path d="M1.5 4.5l2.5 3 4-6.5" fill="none" stroke="#4a70ae" stroke-width="1.9"/></svg></div>
<div class="t" style="left:15px;top:104px">状态</div>
<div class="cb" style="left:76px;top:106px"><svg class="ck" viewBox="0 0 9 9"><path d="M1.5 4.5l2.5 3 4-6.5" fill="none" stroke="#4a70ae" stroke-width="1.9"/></svg></div>
<div class="t" style="left:93px;top:104px">成本金额</div>
<div class="cb" style="left:154px;top:106px"><svg class="ck" viewBox="0 0 9 9"><path d="M1.5 4.5l2.5 3 4-6.5" fill="none" stroke="#4a70ae" stroke-width="1.9"/></svg></div>
<div class="t" style="left:170px;top:104px">联营成本</div>
<div class="cb" style="left:-2px;top:123px"><svg class="ck" viewBox="0 0 9 9"><path d="M1.5 4.5l2.5 3 4-6.5" fill="none" stroke="#4a70ae" stroke-width="1.9"/></svg></div>
<div class="t" style="left:15px;top:121px">数量</div>
<div class="cb" style="left:76px;top:123px"><svg class="ck" viewBox="0 0 9 9"><path d="M1.5 4.5l2.5 3 4-6.5" fill="none" stroke="#4a70ae" stroke-width="1.9"/></svg></div>
<div class="t" style="left:93px;top:121px">单据金额</div>
<div class="cb" style="left:154px;top:123px"><svg class="ck" viewBox="0 0 9 9"><path d="M1.5 4.5l2.5 3 4-6.5" fill="none" stroke="#4a70ae" stroke-width="1.9"/></svg></div>
<div class="t" style="left:170px;top:121px">数量</div>
<div class="cb" style="left:-2px;top:140px"><svg class="ck" viewBox="0 0 9 9"><path d="M1.5 4.5l2.5 3 4-6.5" fill="none" stroke="#4a70ae" stroke-width="1.9"/></svg></div>
<div class="t" style="left:15px;top:138px">成本金额</div>
<div class="cb" style="left:76px;top:140px"><svg class="ck" viewBox="0 0 9 9"><path d="M1.5 4.5l2.5 3 4-6.5" fill="none" stroke="#4a70ae" stroke-width="1.9"/></svg></div>
<div class="t" style="left:93px;top:138px">增值金额</div>
<div class="cb" style="left:154px;top:140px"><svg class="ck" viewBox="0 0 9 9"><path d="M1.5 4.5l2.5 3 4-6.5" fill="none" stroke="#4a70ae" stroke-width="1.9"/></svg></div>
<div class="t" style="left:170px;top:138px">金额</div>
<div class="cb" style="left:-2px;top:157px"><svg class="ck" viewBox="0 0 9 9"><path d="M1.5 4.5l2.5 3 4-6.5" fill="none" stroke="#4a70ae" stroke-width="1.9"/></svg></div>
<div class="t" style="left:15px;top:155px">单据金额</div>
<div class="cb" style="left:76px;top:157px"><svg class="ck" viewBox="0 0 9 9"><path d="M1.5 4.5l2.5 3 4-6.5" fill="none" stroke="#4a70ae" stroke-width="1.9"/></svg></div>
<div class="t" style="left:93px;top:155px">数量</div>
<div class="cb" style="left:154px;top:157px"><svg class="ck" viewBox="0 0 9 9"><path d="M1.5 4.5l2.5 3 4-6.5" fill="none" stroke="#4a70ae" stroke-width="1.9"/></svg></div>
<div class="t" style="left:170px;top:155px">数量</div>
<div class="cb" style="left:-2px;top:174px"><svg class="ck" viewBox="0 0 9 9"><path d="M1.5 4.5l2.5 3 4-6.5" fill="none" stroke="#4a70ae" stroke-width="1.9"/></svg></div>
<div class="t" style="left:15px;top:172px">增值金额</div>
<div class="cb" style="left:76px;top:174px"><svg class="ck" viewBox="0 0 9 9"><path d="M1.5 4.5l2.5 3 4-6.5" fill="none" stroke="#4a70ae" stroke-width="1.9"/></svg></div>
<div class="t" style="left:93px;top:172px">成本金额</div>
<div class="cb" style="left:154px;top:174px"><svg class="ck" viewBox="0 0 9 9"><path d="M1.5 4.5l2.5 3 4-6.5" fill="none" stroke="#4a70ae" stroke-width="1.9"/></svg></div>
<div class="t" style="left:170px;top:172px">金额</div>
<div class="cb" style="left:-2px;top:191px"><svg class="ck" viewBox="0 0 9 9"><path d="M1.5 4.5l2.5 3 4-6.5" fill="none" stroke="#4a70ae" stroke-width="1.9"/></svg></div>
<div class="t" style="left:15px;top:189px">数量</div>
<div class="cb" style="left:76px;top:191px"><svg class="ck" viewBox="0 0 9 9"><path d="M1.5 4.5l2.5 3 4-6.5" fill="none" stroke="#4a70ae" stroke-width="1.9"/></svg></div>
<div class="t" style="left:93px;top:189px">单据金额</div>
<div class="cb" style="left:154px;top:191px"><svg class="ck" viewBox="0 0 9 9"><path d="M1.5 4.5l2.5 3 4-6.5" fill="none" stroke="#4a70ae" stroke-width="1.9"/></svg></div>
<div class="t" style="left:170px;top:189px">数量</div>
<div class="cb" style="left:-2px;top:208px"><svg class="ck" viewBox="0 0 9 9"><path d="M1.5 4.5l2.5 3 4-6.5" fill="none" stroke="#4a70ae" stroke-width="1.9"/></svg></div>
<div class="t" style="left:15px;top:206px">成本金额</div>
<div class="cb" style="left:76px;top:208px"><svg class="ck" viewBox="0 0 9 9"><path d="M1.5 4.5l2.5 3 4-6.5" fill="none" stroke="#4a70ae" stroke-width="1.9"/></svg></div>
<div class="t" style="left:93px;top:206px">增值金额</div>
<div class="cb" style="left:154px;top:208px"><svg class="ck" viewBox="0 0 9 9"><path d="M1.5 4.5l2.5 3 4-6.5" fill="none" stroke="#4a70ae" stroke-width="1.9"/></svg></div>
<div class="t" style="left:170px;top:206px">金额</div>
<div class="cb" style="left:-2px;top:225px"><svg class="ck" viewBox="0 0 9 9"><path d="M1.5 4.5l2.5 3 4-6.5" fill="none" stroke="#4a70ae" stroke-width="1.9"/></svg></div>
<div class="t" style="left:15px;top:223px">单据金额</div>
<div class="cb" style="left:76px;top:225px"><svg class="ck" viewBox="0 0 9 9"><path d="M1.5 4.5l2.5 3 4-6.5" fill="none" stroke="#4a70ae" stroke-width="1.9"/></svg></div>
<div class="t" style="left:93px;top:223px">数量</div>
<div class="cb" style="left:154px;top:225px"><svg class="ck" viewBox="0 0 9 9"><path d="M1.5 4.5l2.5 3 4-6.5" fill="none" stroke="#4a70ae" stroke-width="1.9"/></svg></div>
<div class="t" style="left:170px;top:223px">部门</div>
<div class="cb" style="left:-2px;top:242px"><svg class="ck" viewBox="0 0 9 9"><path d="M1.5 4.5l2.5 3 4-6.5" fill="none" stroke="#4a70ae" stroke-width="1.9"/></svg></div>
<div class="t" style="left:15px;top:240px">增值金额</div>
<div class="cb" style="left:76px;top:242px"><svg class="ck" viewBox="0 0 9 9"><path d="M1.5 4.5l2.5 3 4-6.5" fill="none" stroke="#4a70ae" stroke-width="1.9"/></svg></div>
<div class="t" style="left:93px;top:240px">成本金额</div>
<div class="cb" style="left:154px;top:242px"><svg class="ck" viewBox="0 0 9 9"><path d="M1.5 4.5l2.5 3 4-6.5" fill="none" stroke="#4a70ae" stroke-width="1.9"/></svg></div>
<div class="t" style="left:170px;top:240px">小组</div>
<div class="cb" style="left:-2px;top:259px"><svg class="ck" viewBox="0 0 9 9"><path d="M1.5 4.5l2.5 3 4-6.5" fill="none" stroke="#4a70ae" stroke-width="1.9"/></svg></div>
<div class="t" style="left:15px;top:257px">数量</div>
<div class="cb" style="left:76px;top:259px"><svg class="ck" viewBox="0 0 9 9"><path d="M1.5 4.5l2.5 3 4-6.5" fill="none" stroke="#4a70ae" stroke-width="1.9"/></svg></div>
<div class="t" style="left:93px;top:257px">数量</div>
<div class="cb" style="left:154px;top:259px"><svg class="ck" viewBox="0 0 9 9"><path d="M1.5 4.5l2.5 3 4-6.5" fill="none" stroke="#4a70ae" stroke-width="1.9"/></svg></div>
<div class="t" style="left:170px;top:257px">大类</div>
<div class="cb" style="left:-2px;top:276px"><svg class="ck" viewBox="0 0 9 9"><path d="M1.5 4.5l2.5 3 4-6.5" fill="none" stroke="#4a70ae" stroke-width="1.9"/></svg></div>
<div class="t" style="left:15px;top:274px">成本金额</div>
<div class="cb" style="left:76px;top:276px"><svg class="ck" viewBox="0 0 9 9"><path d="M1.5 4.5l2.5 3 4-6.5" fill="none" stroke="#4a70ae" stroke-width="1.9"/></svg></div>
<div class="t" style="left:93px;top:274px">成本金额</div>
<div class="cb" style="left:154px;top:276px"><svg class="ck" viewBox="0 0 9 9"><path d="M1.5 4.5l2.5 3 4-6.5" fill="none" stroke="#4a70ae" stroke-width="1.9"/></svg></div>
<div class="t" style="left:170px;top:274px">小类</div>
<div class="cb" style="left:-2px;top:293px"><svg class="ck" viewBox="0 0 9 9"><path d="M1.5 4.5l2.5 3 4-6.5" fill="none" stroke="#4a70ae" stroke-width="1.9"/></svg></div>
<div class="t" style="left:15px;top:291px">数量</div>
<div class="cb" style="left:76px;top:293px"><svg class="ck" viewBox="0 0 9 9"><path d="M1.5 4.5l2.5 3 4-6.5" fill="none" stroke="#4a70ae" stroke-width="1.9"/></svg></div>
<div class="t" style="left:93px;top:291px">单据金额</div>
<div class="cb" style="left:154px;top:293px"><svg class="ck" viewBox="0 0 9 9"><path d="M1.5 4.5l2.5 3 4-6.5" fill="none" stroke="#4a70ae" stroke-width="1.9"/></svg></div>
<div class="t" style="left:170px;top:291px">厂商</div>
<div class="cb" style="left:-2px;top:310px"><svg class="ck" viewBox="0 0 9 9"><path d="M1.5 4.5l2.5 3 4-6.5" fill="none" stroke="#4a70ae" stroke-width="1.9"/></svg></div>
<div class="t" style="left:15px;top:308px">成本金额</div>
<div class="cb" style="left:76px;top:310px"><svg class="ck" viewBox="0 0 9 9"><path d="M1.5 4.5l2.5 3 4-6.5" fill="none" stroke="#4a70ae" stroke-width="1.9"/></svg></div>
<div class="t" style="left:93px;top:308px">增值金额</div>
<div class="cb" style="left:154px;top:310px"><svg class="ck" viewBox="0 0 9 9"><path d="M1.5 4.5l2.5 3 4-6.5" fill="none" stroke="#4a70ae" stroke-width="1.9"/></svg></div>
<div class="t" style="left:170px;top:308px">商品条码</div>
<div class="cb" style="left:-2px;top:327px"><svg class="ck" viewBox="0 0 9 9"><path d="M1.5 4.5l2.5 3 4-6.5" fill="none" stroke="#4a70ae" stroke-width="1.9"/></svg></div>
<div class="t" style="left:15px;top:325px">单据金额</div>
<div class="cb" style="left:76px;top:327px"><svg class="ck" viewBox="0 0 9 9"><path d="M1.5 4.5l2.5 3 4-6.5" fill="none" stroke="#4a70ae" stroke-width="1.9"/></svg></div>
<div class="t" style="left:93px;top:325px">数量</div>
<div class="cb" style="left:154px;top:327px"><svg class="ck" viewBox="0 0 9 9"><path d="M1.5 4.5l2.5 3 4-6.5" fill="none" stroke="#4a70ae" stroke-width="1.9"/></svg></div>
<div class="t" style="left:170px;top:325px">品牌</div>
<div class="cb" style="left:-2px;top:344px"><svg class="ck" viewBox="0 0 9 9"><path d="M1.5 4.5l2.5 3 4-6.5" fill="none" stroke="#4a70ae" stroke-width="1.9"/></svg></div>
<div class="t" style="left:15px;top:342px">增值金额</div>
<div class="cb" style="left:76px;top:344px"><svg class="ck" viewBox="0 0 9 9"><path d="M1.5 4.5l2.5 3 4-6.5" fill="none" stroke="#4a70ae" stroke-width="1.9"/></svg></div>
<div class="t" style="left:93px;top:342px">成本金额</div>
<div class="cb" style="left:154px;top:344px"><svg class="ck" viewBox="0 0 9 9"><path d="M1.5 4.5l2.5 3 4-6.5" fill="none" stroke="#4a70ae" stroke-width="1.9"/></svg></div>
<div class="t" style="left:170px;top:342px">合作方式</div>
<div class="cb" style="left:-2px;top:361px"><svg class="ck" viewBox="0 0 9 9"><path d="M1.5 4.5l2.5 3 4-6.5" fill="none" stroke="#4a70ae" stroke-width="1.9"/></svg></div>
<div class="t" style="left:15px;top:359px">数量</div>
<div class="cb" style="left:76px;top:361px"><svg class="ck" viewBox="0 0 9 9"><path d="M1.5 4.5l2.5 3 4-6.5" fill="none" stroke="#4a70ae" stroke-width="1.9"/></svg></div>
<div class="t" style="left:93px;top:359px">单据金额</div>
<div class="cb" style="left:-2px;top:378px"><svg class="ck" viewBox="0 0 9 9"><path d="M1.5 4.5l2.5 3 4-6.5" fill="none" stroke="#4a70ae" stroke-width="1.9"/></svg></div>
<div class="t" style="left:15px;top:376px">成本金额</div>
<div class="cb" style="left:76px;top:378px"><svg class="ck" viewBox="0 0 9 9"><path d="M1.5 4.5l2.5 3 4-6.5" fill="none" stroke="#4a70ae" stroke-width="1.9"/></svg></div>
<div class="t" style="left:93px;top:376px">增值金额</div>
<div class="abs" style="left:13px;top:0px;width:61px;height:18px;border:1px dotted #444"></div>
</div>
</body></html>
